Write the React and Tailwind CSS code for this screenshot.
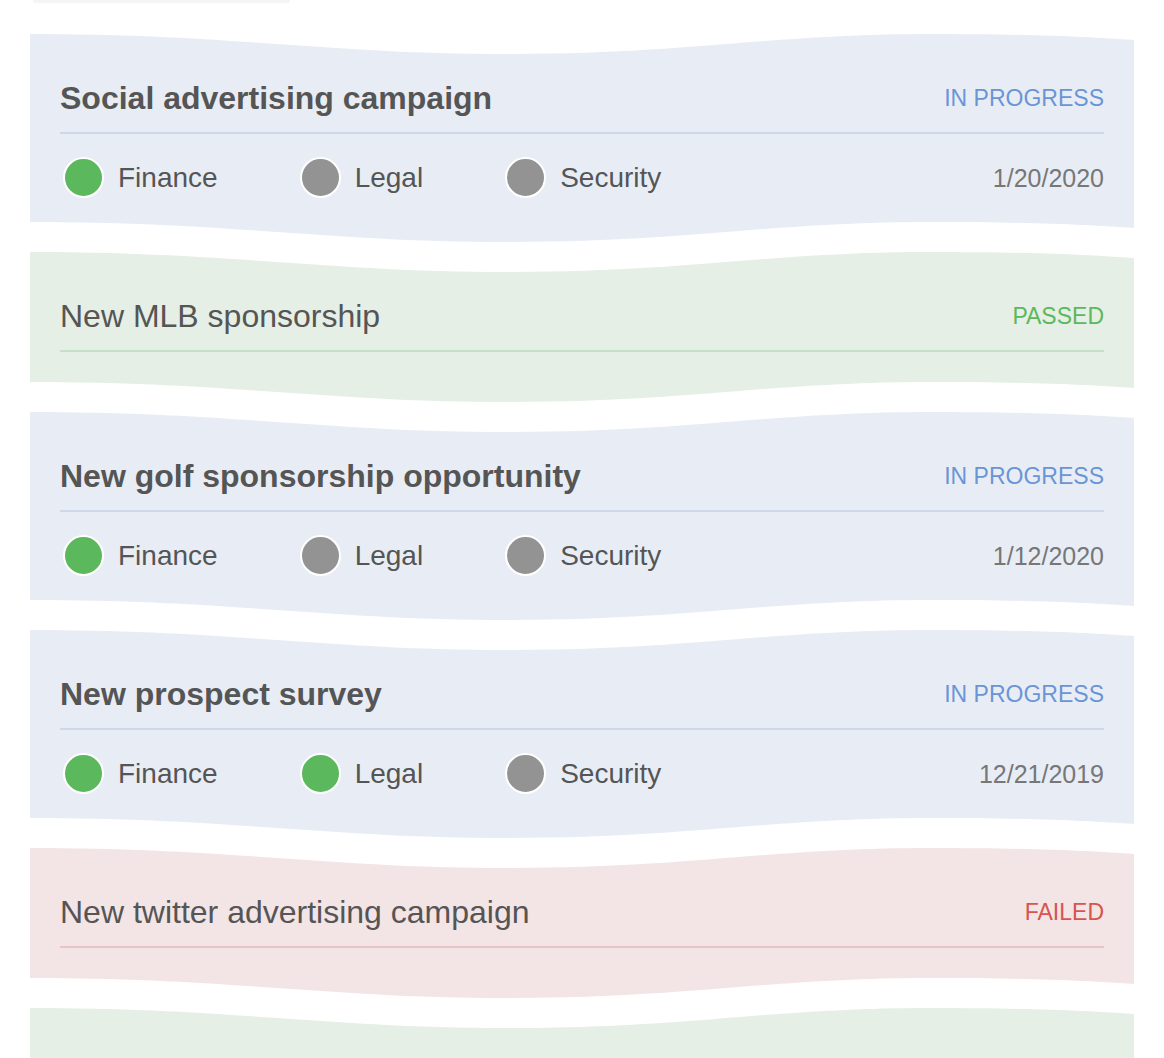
import React from 'react';

const font = { fontFamily: '"Liberation Sans", Arial, Helvetica, sans-serif' };

const WAVE = 'M0,0 C200,0 300,20 480,20 C660,20 740,0 900,0 C1000,0 1060,3 1104,6';

const themes = {
  progress: {
    bg: 'fill-[#e8edf5]',
    body: 'bg-[#e8edf5]',
    line: 'bg-[#cfd8eb]',
    status: 'text-[#6a95d5]',
    label: 'IN PROGRESS',
  },
  passed: {
    bg: 'fill-[#e5efe6]',
    body: 'bg-[#e5efe6]',
    line: 'bg-[#c6dfc7]',
    status: 'text-[#5cb85c]',
    label: 'PASSED',
  },
  failed: {
    bg: 'fill-[#f3e4e5]',
    body: 'bg-[#f3e4e5]',
    line: 'bg-[#e8c4c5]',
    status: 'text-[#d9534f]',
    label: 'FAILED',
  },
};

const requests = [
  {
    title: 'Social advertising campaign',
    status: 'progress',
    date: '1/20/2020',
    phases: { Finance: true, Legal: false, Security: false },
  },
  { title: 'New MLB sponsorship', status: 'passed' },
  {
    title: 'New golf sponsorship opportunity',
    status: 'progress',
    date: '1/12/2020',
    phases: { Finance: true, Legal: false, Security: false },
  },
  {
    title: 'New prospect survey',
    status: 'progress',
    date: '12/21/2019',
    phases: { Finance: true, Legal: true, Security: false },
  },
  { title: 'New twitter advertising campaign', status: 'failed' },
];

const WaveTop = ({ fill }) => (
  <svg viewBox="0 0 1104 20" preserveAspectRatio="none" className="block w-full h-5">
    <path d={`${WAVE} L1104,20 L0,20 Z`} className={fill} />
  </svg>
);

const WaveBottom = ({ fill }) => (
  <svg viewBox="0 0 1104 20" preserveAspectRatio="none" className="block w-full h-5">
    <path d={`${WAVE} L1104,0 L0,0 Z`} className={fill} />
  </svg>
);

const Phase = ({ name, done }) => (
  <div className="flex items-center gap-[14px]">
    <span
      className={`block w-[41px] h-[41px] rounded-full border-2 border-white ${
        done ? 'bg-[#5cb85c]' : 'bg-[#939393]'
      }`}
    />
    <span className="text-[28px] leading-[34px] text-[#555]">{name}</span>
  </div>
);

const RequestCard = ({ item }) => {
  const t = themes[item.status];
  const inProgress = item.status === 'progress';

  return (
    <div className="flex flex-col">
      <WaveTop fill={t.bg} />
      <div className={`${t.body} px-[30px] pt-[25px] ${inProgress ? 'pb-[24px]' : 'pb-[30px]'}`}>
        <div className="flex items-center justify-between h-[38px]">
          <h2
            className={`text-[32px] leading-[38px] text-[#555] ${
              inProgress ? 'font-bold' : 'font-normal'
            }`}
          >
            {item.title}
          </h2>
          <span className={`text-[23px] leading-[28px] ${t.status}`}>{t.label}</span>
        </div>
        <div className={`mt-[15px] h-[2px] ${t.line}`} />

        {inProgress && (
          <div className="mt-[23px] flex items-center justify-between pl-[3px]">
            <div className="flex items-center gap-[82px]">
              {Object.entries(item.phases).map(([name, done]) => (
                <Phase key={name} name={name} done={done} />
              ))}
            </div>
            <span className="text-[25px] leading-[30px] text-[#777]">{item.date}</span>
          </div>
        )}
      </div>
      <WaveBottom fill={t.bg} />
    </div>
  );
};

const App = () => {
  return (
    <div className="min-h-screen bg-white" style={font}>
      {/* edge of the toolbar button above the list */}
      <div className="ml-[33px] w-[257px] h-[2px] rounded-b-lg bg-[#f4f4f4] shadow-[0_1px_2px_rgba(0,0,0,0.05)]" />

      <div className="px-[30px] pt-[32px] flex flex-col gap-[10px]">
        {requests.map((item) => (
          <RequestCard key={item.title} item={item} />
        ))}

        {/* next passed request, only its top edge shows */}
        <div className="flex flex-col">
          <WaveTop fill={themes.passed.bg} />
          <div className={`${themes.passed.body} h-[40px]`} />
        </div>
      </div>
    </div>
  );
};

export default App;
